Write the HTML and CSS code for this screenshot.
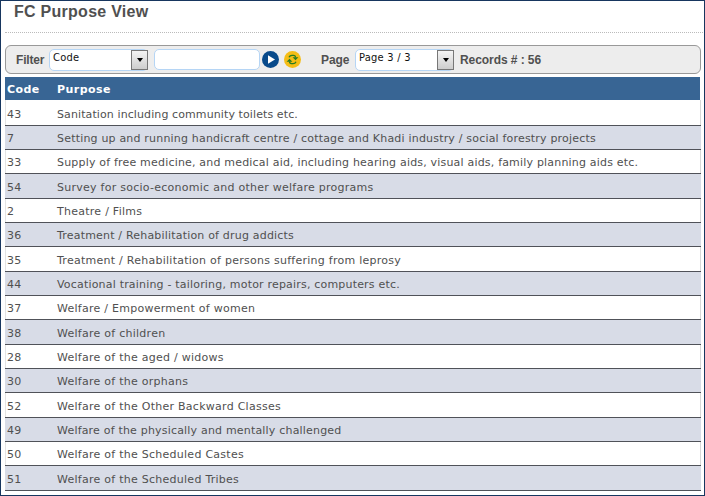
FILE: index.html
```html
<!DOCTYPE html>
<html lang="en">
<head>
<meta charset="utf-8">
<title>FC Purpose View</title>
<link rel="stylesheet" href="styles.css">
</head>
<body>
<main class="window">
  <h1 class="title"><span>FC Purpose View</span></h1>
  <div class="toolbar">
    <span class="label filter-label">Filter</span>
    <div class="select filter-select"><span>Code</span><i class="arrow"></i></div>
    <input class="search" type="text" aria-label="Filter value">
    <svg class="icon go" viewBox="0 0 17 17"><circle cx="8.5" cy="8.5" r="8.5" fill="#084a8b"/><path d="M6 4.2 13 8.5 6 12.8Z" fill="#fff"/></svg>
    <svg class="icon refresh" viewBox="0 0 17 17"><circle cx="8.5" cy="8.5" r="8.5" fill="#f5bd16"/><g fill="none" stroke="#287c22" stroke-width="1.3"><path d="M5 6.3Q5.8 4.4 8 4.4H9.5Q11.5 4.4 11.5 6.5"/><path d="M12 10.7Q11.2 12.6 9 12.6H7.5Q5.5 12.6 5.5 10.5"/></g><path d="M8.6 6.3H14.4L11.5 9.3ZM2.6 10.7H8.4L5.5 7.7Z" fill="#287c22"/></svg>
    <span class="label page-label">Page</span>
    <div class="select page-select"><span>Page 3 / 3</span><i class="arrow"></i></div>
    <span class="label records">Records # : 56</span>
  </div>
  <div class="table">
    <div class="head"><span>Code</span><span>Purpose</span></div>
    <div class="rows">
      <div class="row"><span>43</span><span class="tighter">Sanitation including community toilets etc.</span></div>
      <div class="row"><span>7</span><span class="tight">Setting up and running handicraft centre / cottage and Khadi industry / social forestry projects</span></div>
      <div class="row"><span>33</span><span class="tight">Supply of free medicine, and medical aid, including hearing aids, visual aids, family planning aids etc.</span></div>
      <div class="row"><span>54</span><span>Survey for socio-economic and other welfare programs</span></div>
      <div class="row"><span>2</span><span>Theatre / Films</span></div>
      <div class="row"><span>36</span><span class="tight">Treatment / Rehabilitation of drug addicts</span></div>
      <div class="row"><span>35</span><span>Treatment / Rehabilitation of persons suffering from leprosy</span></div>
      <div class="row"><span>44</span><span class="tight">Vocational training - tailoring, motor repairs, computers etc.</span></div>
      <div class="row"><span>37</span><span>Welfare / Empowerment of women</span></div>
      <div class="row"><span>38</span><span>Welfare of children</span></div>
      <div class="row"><span>28</span><span>Welfare of the aged / widows</span></div>
      <div class="row"><span>30</span><span>Welfare of the orphans</span></div>
      <div class="row"><span>52</span><span>Welfare of the Other Backward Classes</span></div>
      <div class="row"><span>49</span><span class="tight">Welfare of the physically and mentally challenged</span></div>
      <div class="row"><span>50</span><span>Welfare of the Scheduled Castes</span></div>
      <div class="row"><span>51</span><span>Welfare of the Scheduled Tribes</span></div>
    </div>
  </div>
</main>
</body>
</html>
```
FILE: styles.css
```css
* { box-sizing: border-box; }
body { margin: 0; background: #fff; color: #505050; }
.window {
  width: 705px;
  height: 496px;
  border: 1px solid #17365f;
  padding: 0 3px 0 4px;
  overflow: hidden;
}
.title {
  margin: 0 -2px 12px 0;
  height: 32px;
  padding-left: 9px;
  border-bottom: 1px dotted #bbb;
  font: bold 16px/21px "Liberation Sans", Arial, sans-serif;
  letter-spacing: 0.27px;
}
.toolbar {
  display: flex;
  align-items: center;
  width: 696px;
  height: 29px;
  margin-bottom: 3px;
  padding-left: 10px;
  background: #ededed;
  border: 1px solid #999;
  border-radius: 6px;
}
.label { font: bold 12px/16px "Liberation Sans", Arial, sans-serif; white-space: nowrap; }
.filter-label { width: 33px; letter-spacing: -0.2px; }
.records { letter-spacing: -0.07px; }
.select {
  display: flex;
  justify-content: space-between;
  height: 22px;
  padding-left: 3px;
  background: #fff;
  border: 1px solid #b5d5f5;
  border-radius: 5px;
  font: 11px/16px "DejaVu Sans Condensed", "DejaVu Sans", sans-serif;
  letter-spacing: 0.25px;
  color: #111;
}
.filter-select, .page-select { width: 99px; margin-right: 6px; }
.arrow {
  display: grid;
  place-items: center;
  width: 17px;
  height: 20px;
  margin-right: -1px;
  background: linear-gradient(#f4f4f4, #cdcdcd);
  border: 1px solid #777;
}
.arrow::after {
  content: "";
  border: 3.5px solid transparent;
  border-top: 4px solid #000;
  border-bottom: 0;
}
.search {
  width: 106px;
  height: 21px;
  padding: 0 4px;
  background: #fff;
  border: 1px solid #b5d5f5;
  border-radius: 5px;
}
.icon { width: 17px; height: 17px; }
.go { margin-left: 2px; }
.refresh { margin-left: 5px; }
.page-label { width: 34px; margin-left: 20px; letter-spacing: -0.1px; }
.table { width: 696px; font-family: "DejaVu Sans", Verdana, sans-serif; font-size: 11px; }
.head, .row {
  display: grid;
  grid-template-columns: 50px 1fr;
  padding-left: 2px;
  white-space: nowrap;
  letter-spacing: 0.26px;
}
.head {
  width: 695px;
  height: 23px;
  line-height: 25px;
  background: #386594;
  color: #fff;
  font-weight: bold;
  letter-spacing: 0.45px;
}
.row {
  height: 24px;
  line-height: 25px;
  border-bottom: 1px solid #505259;
  box-shadow: inset 1px 0 #e3e3e3, inset -1px 0 #d8d8d8;
}
.row:nth-child(3n + 1) { height: 25px; line-height: 27px; }
.row:first-child { height: 26px; line-height: 29px; }
.row:nth-child(even) { background: #d8dce7; box-shadow: none; }
.tight { letter-spacing: 0.19px; }
.tighter { letter-spacing: 0.1px; }
```
